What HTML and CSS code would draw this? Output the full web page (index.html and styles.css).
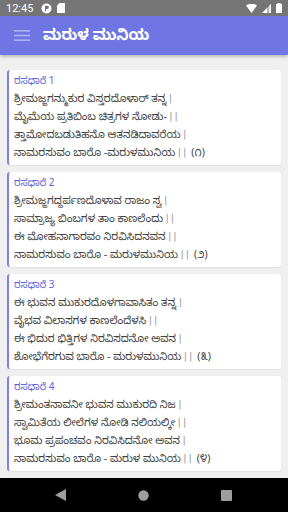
FILE: index.html
```html
<!DOCTYPE html>
<html lang="kn">
<head>
<meta charset="utf-8">
<link rel="stylesheet" href="styles.css">
</head>
<body>
<div class="screen">
  <div class="status">
    <span class="time">12:45</span>
    <svg class="si" width="11" height="11" viewBox="0 0 11 11"><circle cx="5.5" cy="5.5" r="5" fill="#fff"/><path d="M4 2.8h2.3a1.6 1.6 0 0 1 0 3.2H5v2.3H4z" fill="#757575"/></svg>
    <svg class="si" width="8" height="10" viewBox="0 0 8 10"><path d="M2.5 0H8v10H0V2.5z" fill="#fff"/></svg>
    <span class="spacer"></span>
    <svg class="si" width="11" height="9" viewBox="0 0 11 9"><path d="M0 1.5Q5.5-2 11 1.5L5.5 9z" fill="#fff"/></svg>
    <svg class="si" width="9" height="9" viewBox="0 0 9 9"><path d="M9 0V9H0z" fill="#fff" opacity=".5"/><path d="M5 4.5V9H0L5 4z" fill="#fff"/><path d="M9 0V9H7.5V1.5z" fill="#fff"/></svg>
    <svg class="si" width="6" height="10" viewBox="0 0 6 10"><rect x="0" y="1" width="6" height="9" fill="#fff"/><rect x="1.5" y="0" width="3" height="1" fill="#fff"/></svg>
  </div>
  <header class="appbar">
    <svg class="menu" width="16" height="11" viewBox="0 0 16 11"><rect y="0" width="16" height="1.6" fill="#aab6f6"/><rect y="4.7" width="16" height="1.6" fill="#aab6f6"/><rect y="9.4" width="16" height="1.6" fill="#aab6f6"/></svg>
    <h1 class="title">ಮರುಳ ಮುನಿಯ</h1>
  </header>
  <main class="list">
    <section class="card">
      <div class="ctitle">ರಸಧಾರೆ 1</div>
      <p class="line">ಶ್ರೀಮಜ್ಜಗನ್ಮುಕುರ ವಿಸ್ತರದೊಳಾರ್ ತನ್ನ <span class="bar">|</span></p>
      <p class="line">ಮೈಮೆಯ ಪ್ರತಿಬಿಂಬ ಚಿತ್ರಗಳ ನೋಡು- <span class="bar">||</span></p>
      <p class="line">ತ್ತಾಮೋದಬಡುತಿಹನೊ ಆತನಡಿದಾವರೆಯ <span class="bar">|</span></p>
      <p class="line">ನಾಮರಸುವಂ ಬಾರೊ -ಮರುಳಮುನಿಯ <span class="bar">||</span> (೧)</p>
    </section>
    <section class="card">
      <div class="ctitle">ರಸಧಾರೆ 2</div>
      <p class="line">ಶ್ರೀಮಜ್ಜಗದ್ದರ್ಪಣದೊಳಾವ ರಾಜಂ ಸ್ವ <span class="bar">|</span></p>
      <p class="line">ಸಾಮ್ರಾಜ್ಯ ಬಿಂಬಗಳ ತಾಂ ಕಾಣಲೆಂದು <span class="bar">||</span></p>
      <p class="line">ಈ ಮೋಹನಾಗಾರವಂ ನಿರವಿಸಿದನವನ <span class="bar">||</span></p>
      <p class="line">ನಾಮರಸುವಂ ಬಾರೊ - ಮರುಳಮುನಿಯ <span class="bar">||</span> (೨)</p>
    </section>
    <section class="card">
      <div class="ctitle">ರಸಧಾರೆ 3</div>
      <p class="line">ಈ ಭುವನ ಮುಕುರದೊಳಗಾವಾಸಿತಂ ತನ್ನ <span class="bar">|</span></p>
      <p class="line">ವೈಭವ ವಿಲಾಸಗಳ ಕಾಣಲೆಂದೆಳಸಿ <span class="bar">||</span></p>
      <p class="line">ಈ ಭಿದುರ ಭಿತ್ತಿಗಳ ನಿರವಿಸದನೋ ಅವನ <span class="bar">|</span></p>
      <p class="line">ಶೋಭೆಗೆರಗುವ ಬಾರೊ - ಮರುಳಮುನಿಯ <span class="bar">||</span> (೩)</p>
    </section>
    <section class="card">
      <div class="ctitle">ರಸಧಾರೆ 4</div>
      <p class="line">ಶ್ರೀಮಂತನಾವನೀ ಭುವನ ಮುಕುರದಿ ನಿಜ <span class="bar">|</span></p>
      <p class="line">ಸ್ವಾಮಿತೆಯ ಲೀಲೆಗಳ ನೋಡಿ ನಲಿಯಲ್ಕೀ <span class="bar">||</span></p>
      <p class="line">ಭೂಮ ಪ್ರಪಂಚವಂ ನಿರವಿಸಿದನೋ ಅವನ <span class="bar">|</span></p>
      <p class="line">ನಾಮರಸುವಂ ಬಾರೊ - ಮರುಳ ಮುನಿಯ <span class="bar">||</span> (೪)</p>
    </section>
  </main>
  <nav class="navbar">
    <svg width="11" height="12" viewBox="0 0 11 12"><path d="M11 0V12L0 6z" fill="#9e9e9e"/></svg>
    <svg width="11" height="11" viewBox="0 0 11 11"><circle cx="5.5" cy="5.5" r="5.2" fill="#9e9e9e"/></svg>
    <svg width="11" height="11" viewBox="0 0 11 11"><rect width="11" height="11" rx="1" fill="#9e9e9e"/></svg>
  </nav>
</div>
</body>
</html>
```
FILE: styles.css
```css
* { box-sizing: border-box; }
html, body { margin: 0; padding: 0; }
body {
  width: 288px;
  height: 512px;
  overflow: hidden;
  font-family: "Noto Sans", Roboto, "Noto Sans Kannada", sans-serif;
  background: #efefef;
}
.screen {
  display: flex;
  flex-direction: column;
  height: 512px;
}
.status {
  height: 16px;
  background: #757575;
  display: flex;
  align-items: center;
  padding: 0 6px;
  gap: 5px;
  color: #fff;
}
.time {
  font-family: Roboto, sans-serif;
  font-size: 11px;
  margin-right: 3px;
}
.spacer { flex: 1; }
.si { display: block; }
.appbar {
  height: 39px;
  background: #6f76e3;
  display: flex;
  align-items: center;
  padding-left: 14px;
  gap: 13px;
  box-shadow: 0 2px 3px rgba(0,0,0,0.2);
  position: relative;
  z-index: 1;
}
.menu { display: block; }
.title {
  margin: 0;
  color: #fff;
  font-size: 15px;
  font-weight: 700;
}
.list {
  flex: 1;
  overflow: hidden;
  padding: 15px 7px 0;
  display: flex;
  flex-direction: column;
  gap: 7px;
}
.card {
  flex: none;
  background: #fff;
  border-radius: 3px;
  border-left: 2px solid #7c82ea;
  padding: 2px 8px 4px 5px;
  box-shadow: 0 1px 1px rgba(0,0,0,0.06);
  height: 95px;
}
.ctitle {
  color: #5d63dd;
  font-size: 10px;
  line-height: 17px;
}
.line {
  margin: 0;
  color: #424242;
  font-size: 10.5px;
  line-height: 18px;
  white-space: nowrap;
}
.bar {
  font-family: Roboto, sans-serif;
  font-size: 11.5px;
  color: #9a9a9a;
  letter-spacing: 2.5px;
}
.navbar {
  height: 34px;
  background: #000;
  display: flex;
  align-items: center;
  justify-content: space-between;
  padding: 0 56px 0 55px;
}
```
